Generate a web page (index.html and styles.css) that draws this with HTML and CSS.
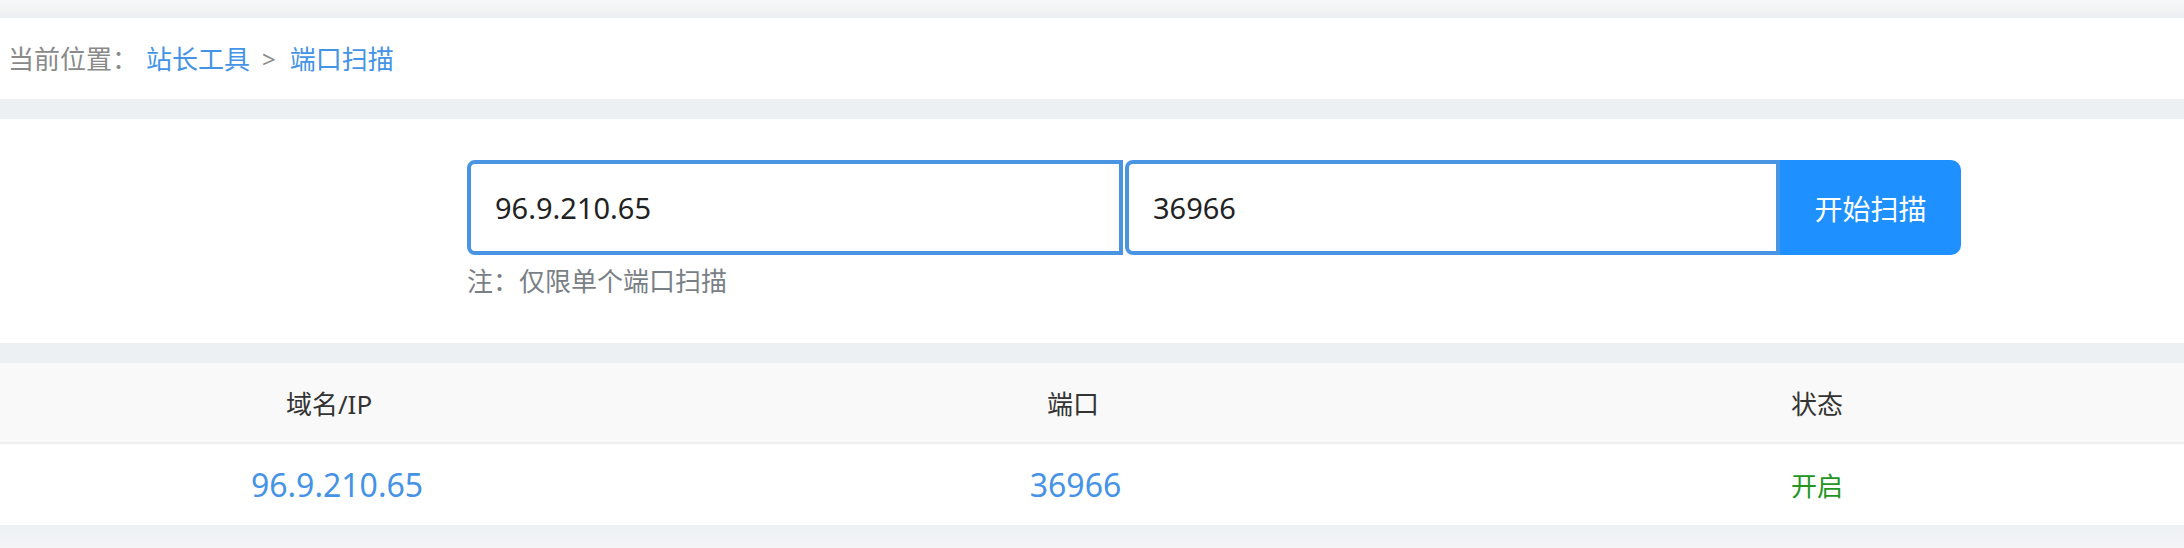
FILE: index.html
```html
<!DOCTYPE html>
<html lang="zh-CN">
<head>
<meta charset="utf-8">
<title>端口扫描</title>
<link rel="stylesheet" href="styles.css">
</head>
<body>
<div class="page">
  <div class="topband"></div>
  <div class="crumbs">
    <span class="crumb-label">当前位置：</span>
    <a class="crumb-link" href="#">站长工具</a>
    <span class="crumb-sep">&gt;</span>
    <a class="crumb-link" href="#">端口扫描</a>
  </div>
  <div class="gap"></div>
  <div class="scan">
    <div class="scan-inner">
      <div class="scan-row">
        <input class="field field-host" type="text" value="96.9.210.65">
        <input class="field field-port" type="text" value="36966">
        <button class="scan-btn" type="button">开始扫描</button>
      </div>
      <div class="note">注：仅限单个端口扫描</div>
    </div>
  </div>
  <div class="gap"></div>
  <div class="result">
    <div class="result-grid">
      <div class="th">域名/IP</div>
      <div class="th">端口</div>
      <div class="th">状态</div>
      <div class="td td-blue td-first">96.9.210.65</div>
      <div class="td td-blue td-mid">36966</div>
      <div class="td td-green">开启</div>
    </div>
  </div>
  <div class="bottomband"></div>
</div>
</body>
</html>
```

FILE: styles.css
```css
* { box-sizing: border-box; }
html, body { margin: 0; padding: 0; }
body {
  background: #edf0f3;
  font-family: "Noto Sans", "Noto Sans CJK SC", sans-serif;
  overflow: hidden;
}
.page {
  width: 2184px;
  height: 548px;
  display: flex;
  flex-direction: column;
  overflow: hidden;
}
.topband {
  height: 18px;
  background: linear-gradient(#f6f7f8, #eceff2);
}
.crumbs {
  height: 81px;
  background: #fff;
  display: flex;
  align-items: center;
  padding-left: 8px;
  padding-bottom: 1px;
  font-size: 26px;
  color: #8a8a8a;
}
.crumb-label { margin-right: 8px; }
.crumb-link { color: #4393e6; text-decoration: none; }
.crumb-sep { margin: 0 14px 0 12px; color: #8a8a8a; font-size: 24px; }
.gap { height: 20px; background: #edf0f3; }
.scan {
  height: 224px;
  background: #fff;
  padding-top: 41px;
  padding-left: 467px;
}
.scan-row {
  display: flex;
  height: 95px;
}
.field {
  height: 95px;
  border: 4px solid #4a94e4;
  background: #fff;
  font-family: "Noto Sans", "Noto Sans CJK SC", sans-serif;
  font-size: 29px;
  color: #222;
  padding: 0 0 0 24px;
  outline: none;
  border-radius: 8px 0 0 8px;
}
.field-host { width: 656px; }
.field-port { width: 655px; margin-left: 2px; }
.scan-btn {
  width: 181px;
  height: 95px;
  border: none;
  background: #1e90ff;
  color: #fff;
  font-family: "Noto Sans CJK SC", sans-serif;
  font-size: 28px;
  border-radius: 0 10px 10px 0;
  padding: 0;
}
.note {
  margin-top: 6px;
  font-size: 26px;
  color: #7a7f86;
  line-height: 38px;
  font-family: "Noto Sans CJK SC", sans-serif;
}
.result { background: #fff; }
.result-grid {
  margin-left: -43px;
  width: 2232px;
  display: grid;
  grid-template-columns: repeat(3, 1fr);
}
.th {
  height: 81px;
  background: #f9f9f9;
  border-bottom: 2px solid #efefef;
  display: flex;
  align-items: center;
  justify-content: center;
  font-size: 26px;
  color: #333;
}
.td {
  height: 81px;
  display: flex;
  align-items: center;
  justify-content: center;
  background: #fff;
}
.td-first { padding-left: 16px; }
.td-mid { padding-left: 5px; }
.td-blue { color: #4693e6; font-size: 32px; }
.td-green { color: #23951f; font-size: 26px; }
.bottomband {
  flex: 1;
  background: linear-gradient(#edf0f3, #f3f5f7);
}
```
